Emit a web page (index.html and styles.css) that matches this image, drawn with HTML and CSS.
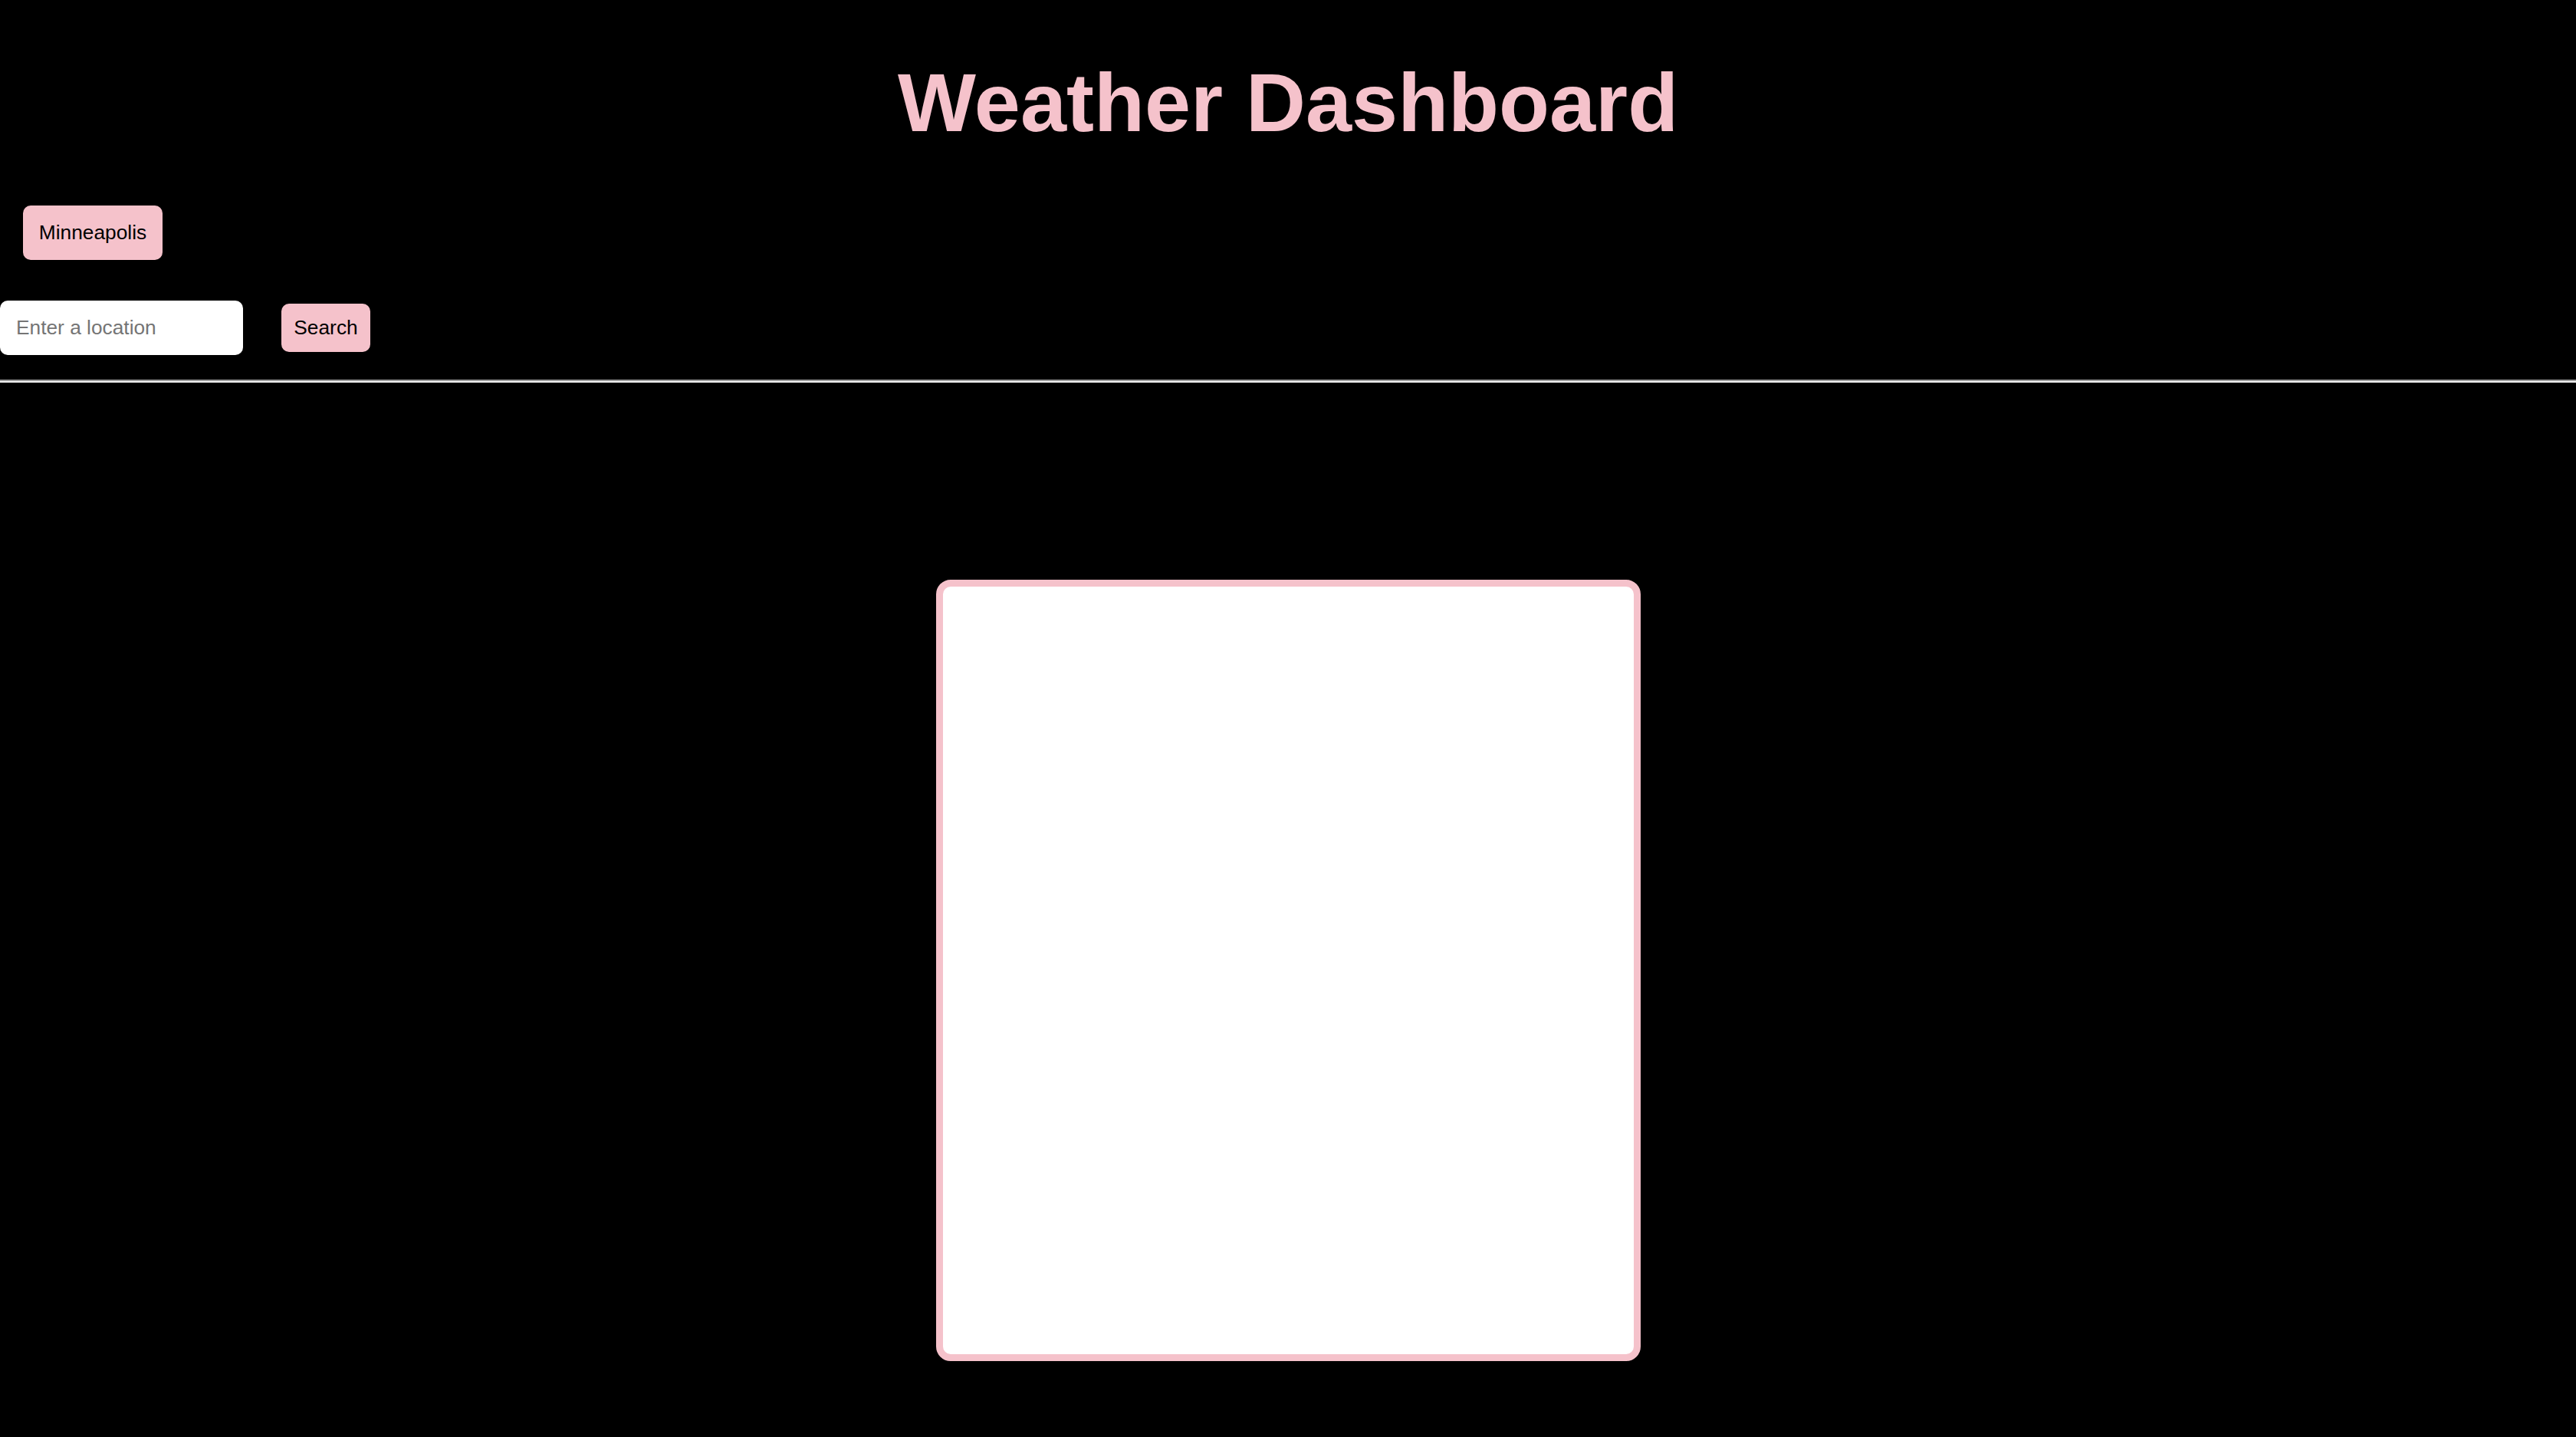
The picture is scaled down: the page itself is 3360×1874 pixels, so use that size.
FILE: index.html
```html
<!DOCTYPE html>
<html lang="en">
<head>
<meta charset="utf-8">
<title>Weather Dashboard</title>
<link rel="stylesheet" href="styles.css">
</head>
<body>
  <header class="header">
    <h1 class="title">Weather Dashboard</h1>
  </header>
  <section class="controls">
    <div class="history">
      <button class="btn history-btn" type="button">Minneapolis</button>
    </div>
    <form class="search">
      <input class="search-input" type="text" placeholder="Enter a location">
      <button class="btn search-btn" type="button">Search</button>
    </form>
  </section>
  <hr class="divider">
  <main class="main">
    <div class="card"></div>
  </main>
</body>
</html>
```
FILE: styles.css
```css
html, body {
  margin: 0;
  padding: 0;
  background: #000;
}
body {
  font-family: "Liberation Sans", Arial, sans-serif;
  color: #000;
  min-height: 1874px;
}
.header {
  display: flex;
  justify-content: center;
}
.title {
  margin: 72px 0 72px;
  font-size: 108px;
  line-height: 124px;
  font-weight: bold;
  color: #f5c2cb;
  letter-spacing: 0;
}
.controls {
  display: flex;
  flex-direction: column;
}
.history {
  display: flex;
  padding-left: 30px;
}
.btn {
  font-family: "Liberation Sans", Arial, sans-serif;
  font-size: 26.3px;
  color: #000;
  background: #f5c2cb;
  border: none;
  border-radius: 10px;
  cursor: pointer;
}
.history-btn {
  width: 182px;
  height: 71px;
  padding: 0;
}
.search {
  display: flex;
  align-items: center;
  gap: 50px;
  margin-top: 53px;
}
.search-input {
  box-sizing: border-box;
  width: 317px;
  height: 71px;
  margin: 0;
  padding: 0 21px;
  border: none;
  border-radius: 10px;
  background: #fff;
  font-family: "Liberation Sans", Arial, sans-serif;
  font-size: 26.3px;
  color: #000;
  outline: none;
}
.search-input::placeholder {
  color: #757575;
}
.search-btn {
  width: 116px;
  height: 63px;
  padding: 0;
}
.divider {
  margin: 32px 0 0;
  height: 0;
  border: none;
  border-top: 2px solid #9c9c9c;
  border-bottom: 2px solid #f2f2f2;
}
.main {
  display: flex;
  justify-content: center;
  padding-top: 257px;
}
.card {
  box-sizing: border-box;
  width: 919px;
  height: 1019px;
  background: #fff;
  border: 9px solid #f5c2cb;
  border-radius: 19px;
}
```
